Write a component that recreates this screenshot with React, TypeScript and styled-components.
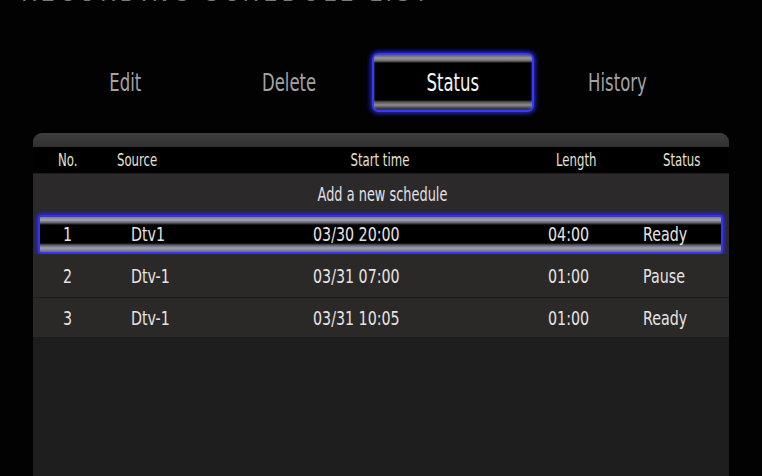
import React from "react";
import styled, { createGlobalStyle } from "styled-components";

const GlobalStyle = createGlobalStyle`
  html, body {
    margin: 0;
    padding: 0;
    background: #000;
  }
  body {
    font-family: "DejaVu Sans", "Liberation Sans", sans-serif;
  }
`;

const COLS = "80px 180px 174px 166px 96px";

const Screen = styled.div`
  width: 762px;
  height: 476px;
  overflow: hidden;
  background: #020202;
  display: flex;
  flex-direction: column;
`;

// the set-top box font is much narrower than anything installed, so squeeze it
const Narrow = styled.span<{ $origin?: "left" | "center"; $sx?: number }>`
  display: inline-block;
  white-space: nowrap;
  transform: scaleX(${(p) => p.$sx ?? 0.75});
  transform-origin: ${(p) => p.$origin ?? "left"} center;
`;

const TitleClip = styled.div`
  height: 7px;
  overflow: hidden;
  padding-left: 21px;
  flex: none;
`;

const TitleText = styled.div`
  margin-top: -22px;
  font-size: 28px;
  line-height: 28px;
  letter-spacing: 5px;
  color: #7a7a7a;
  white-space: nowrap;
  transform: scaleX(0.8);
  transform-origin: left top;
`;

const TabBar = styled.div`
  margin-top: 46px;
  padding-left: 43px;
  display: grid;
  grid-template-columns: repeat(4, 164px);
  flex: none;
`;

const Tab = styled.div<{ $active?: boolean }>`
  height: 59px;
  display: flex;
  align-items: center;
  justify-content: center;
  font-size: 25px;
  color: ${(p) => (p.$active ? "#f4f4f4" : "#a2a2a2")};
  ${(p) =>
    p.$active &&
    `
    margin: 0 1px;
    box-sizing: border-box;
    border: 2px solid #3a3af5;
    border-radius: 6px;
    box-shadow: 0 0 5px 1px #2d2dff, inset 0 0 2px #6a6aff;
    background: linear-gradient(
      to bottom,
      #5a5a5a 0px,
      #9a9a9a 3px,
      #6a6a6a 6px,
      #000 8px,
      #000 calc(100% - 10px),
      #555 calc(100% - 8px),
      #8e8e8e calc(100% - 5px),
      #444 calc(100% - 2px),
      #111 100%
    );
  `}
`;

const Panel = styled.div`
  margin: 21px 33px 0 33px;
  flex: 1;
  display: flex;
  flex-direction: column;
  border-radius: 9px 9px 0 0;
  overflow: hidden;
  background: #1f1e1e;
`;

const PanelLip = styled.div`
  height: 14px;
  background: linear-gradient(to bottom, #3e3e3e, #303030);
`;

const HeaderRow = styled.div`
  height: 26px;
  display: grid;
  grid-template-columns: ${COLS};
  align-items: center;
  background: #000;
  color: #e6e3d0;
  font-size: 17.5px;
`;

const AddRow = styled.div`
  height: 40px;
  margin-top: 1px;
  display: flex;
  align-items: center;
  justify-content: center;
  padding-left: 3px;
  background: #2b2929;
  color: #e2e0e6;
  font-size: 19px;
`;

const Row = styled.div<{ $selected?: boolean; $h: number }>`
  position: relative;
  height: ${(p) => p.$h}px;
  display: grid;
  grid-template-columns: ${COLS};
  align-items: center;
  background: #2b2828;
  color: #e6e4e2;
  font-size: 19px;
  border-bottom: 1px solid #1d1b1b;
  box-sizing: border-box;
  ${(p) =>
    p.$selected &&
    `
    border-bottom: none;
    &::before {
      content: "";
      position: absolute;
      left: 5px;
      right: 6px;
      top: 1px;
      bottom: 0;
      border: 2px solid #3434f0;
      border-radius: 3px;
      box-shadow: 0 0 4px 1px #2a2aff;
      background: linear-gradient(
        to bottom,
        #7a7a90 0px,
        #a4a4b4 3px,
        #5a5a66 6px,
        #000 8px,
        #000 calc(100% - 9px),
        #5a5a66 calc(100% - 7px),
        #a0a0b0 calc(100% - 4px),
        #6a6a80 100%
      );
    }
  `}
`;

const Cell = styled.div<{ $pad?: number; $center?: boolean }>`
  position: relative;
  z-index: 1;
  white-space: nowrap;
  padding-left: ${(p) => p.$pad ?? 0}px;
  text-align: ${(p) => (p.$center ? "center" : "left")};
`;

const Filler = styled.div`
  flex: 1;
  background: #1f1e1e;
`;

const tabs = ["Edit", "Delete", "Status", "History"];

const rows = [
  { no: "1", src: "Dtv1", start: "03/30 20:00", len: "04:00", status: "Ready", h: 40 },
  { no: "2", src: "Dtv-1", start: "03/31 07:00", len: "01:00", status: "Pause", h: 44 },
  { no: "3", src: "Dtv-1", start: "03/31 10:05", len: "01:00", status: "Ready", h: 40 },
];

const HEAD_SX = 0.67;

export default function App() {
  return (
    <Screen>
      <GlobalStyle />
      <TitleClip>
        <TitleText>RECORDING SCHEDULE LIST</TitleText>
      </TitleClip>
      <TabBar>
        {tabs.map((t) => (
          <Tab key={t} $active={t === "Status"}>
            <Narrow $origin="center" $sx={0.66}>{t}</Narrow>
          </Tab>
        ))}
      </TabBar>
      <Panel>
        <PanelLip />
        <HeaderRow>
          <Cell $pad={25}><Narrow $sx={HEAD_SX}>No.</Narrow></Cell>
          <Cell $pad={4}><Narrow $sx={HEAD_SX}>Source</Narrow></Cell>
          <Cell $center><Narrow $origin="center" $sx={HEAD_SX}>Start time</Narrow></Cell>
          <Cell $pad={89}><Narrow $sx={HEAD_SX}>Length</Narrow></Cell>
          <Cell $pad={30}><Narrow $sx={HEAD_SX}>Status</Narrow></Cell>
        </HeaderRow>
        <AddRow>
          <Narrow $origin="center" $sx={0.68}>Add a new schedule</Narrow>
        </AddRow>
        {rows.map((r, i) => (
          <Row key={r.no} $selected={i === 0} $h={r.h}>
            <Cell $pad={30}><Narrow>{r.no}</Narrow></Cell>
            <Cell $pad={18}><Narrow>{r.src}</Narrow></Cell>
            <Cell $pad={20}><Narrow>{r.start}</Narrow></Cell>
            <Cell $pad={81}><Narrow>{r.len}</Narrow></Cell>
            <Cell $pad={10}><Narrow>{r.status}</Narrow></Cell>
          </Row>
        ))}
        <Filler />
      </Panel>
    </Screen>
  );
}
